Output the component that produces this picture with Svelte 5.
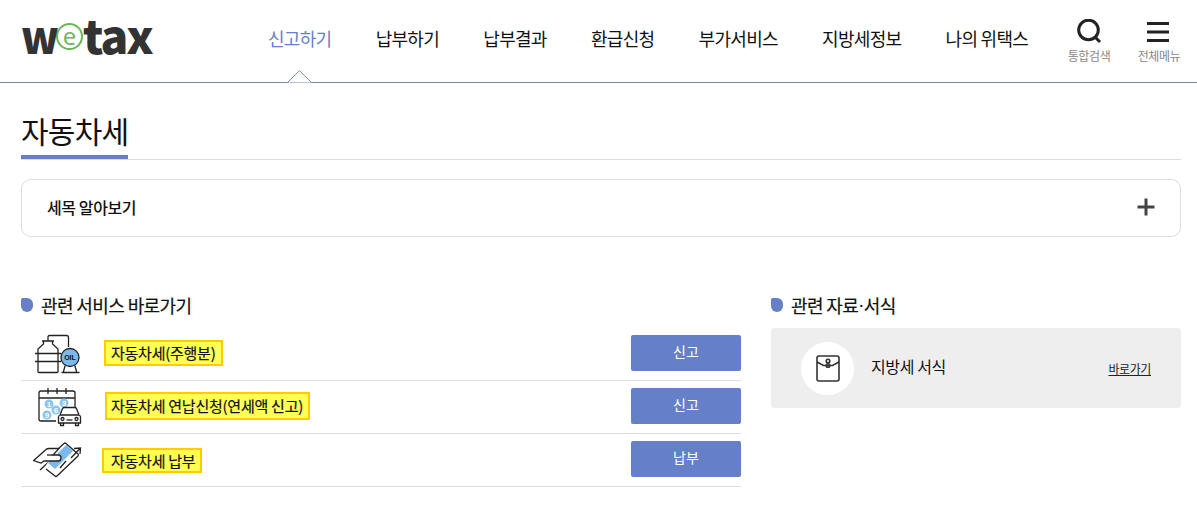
<script>
  const menus = ['신고하기', '납부하기', '납부결과', '환급신청', '부가서비스', '지방세정보', '나의 위택스'];
  const services = [
    { name: '자동차세(주행분)', action: '신고', icon: 'oil', left: 0, pad: 5, h: 26, up: 3 },
    { name: '자동차세 연납신청(연세액 신고)', action: '신고', icon: 'calendar', left: 1, pad: 4, h: 28, up: 3 },
    { name: '자동차세 납부', action: '납부', icon: 'card', left: -2, pad: 7, h: 25, up: 0 }
  ];
</script>

<header class="top">
  <div class="logo"><span class="logo-w">w</span><span class="logo-e"><span>e</span></span>tax</div>
  <nav class="gnb">
    {#each menus as menu, i}
      <span class="gnb-item" class:active={i === 0}>{menu}</span>
    {/each}
  </nav>
  <div class="utils">
    <div class="util">
      <svg width="26" height="25" viewBox="0 0 26 25">
        <circle cx="12.500" cy="11" r="9.800" fill="none" stroke="#222" stroke-width="3"/>
        <path d="M19 18l5 5" stroke="#222" stroke-width="3" fill="none"/>
      </svg>
      <span>통합검색</span>
    </div>
    <div class="util">
      <svg width="24" height="25" viewBox="0 0 24 25">
        <path d="M0 4.500h22M0 13h22M0 21.500h22" stroke="#222" stroke-width="3" fill="none"/>
      </svg>
      <span>전체메뉴</span>
    </div>
  </div>
  <svg class="notch" width="25" height="13" viewBox="0 0 25 13">
    <path d="M0.500 12.500L12.500 0.700l12 11.800" fill="#fff" stroke="#7d87aa"/>
  </svg>
</header>

<main class="content">
  <div class="title-row">
    <h1>자동차세</h1>
  </div>

  <div class="accordion">
    <strong>세목 알아보기</strong>
    <svg width="18" height="18" viewBox="0 0 18 18">
      <path d="M9 0.500v17M0.500 9h17" stroke="#444" stroke-width="3" fill="none"/>
    </svg>
  </div>

  <div class="columns">
    <section class="col-left">
      <h2><i class="bullet"></i>관련 서비스 바로가기</h2>
      <ul>
        {#each services as s}
          <li>
            <span class="icon">
              {#if s.icon === 'oil'}
                <svg width="50" height="40" viewBox="0 0 50 40" fill="none" stroke="#222" stroke-width="1.300">
                  <path d="M9 7h12M10.500 7v3L5 15v22.500q0 1 1 1h18q1 0 1-1V15l-5.500-5V7"/>
                  <path d="M2 19.500h26M2 27.500h26M15 7V3q0-1.500 1.500-1.500h17q2 0 2 2V13"/>
                  <circle cx="37" cy="23.500" r="9" fill="#7ab8ee"/>
                  <path d="M32 32l-1.500 5.500M42 32l1.500 5.500M29 38.500h17" stroke-linecap="round"/>
                  <text x="37" y="26" class="oil" text-anchor="middle">OIL</text>
                </svg>
              {:else if s.icon === 'calendar'}
                <svg class="shift" width="50" height="40" viewBox="0 0 50 40" fill="none" stroke="#222" stroke-width="1.300">
                  <path d="M20 34H5q-2 0-2-2V6q0-2 2-2h32q2 0 2 2v16M3 11h36M12 1v6M21 1v6M30 1v6"/>
                  <circle cx="13" cy="17" r="4.500" fill="#8ac4f2" stroke="none"/>
                  <circle cx="28" cy="16" r="4.500" fill="#8ac4f2" stroke="none"/>
                  <circle cx="20" cy="23" r="4.500" fill="#8ac4f2" stroke="none"/>
                  <circle cx="11" cy="28" r="4.500" fill="#8ac4f2" stroke="none"/>
                  <text x="13" y="20" class="num" text-anchor="middle">1</text>
                  <text x="28" y="19" class="num" text-anchor="middle">3</text>
                  <text x="20" y="26" class="num" text-anchor="middle">6</text>
                  <text x="11" y="31" class="num" text-anchor="middle">9</text>
                  <path d="M24 28l2.500-6.500q.5-1 2-1h10q1.500 0 2 1l2.500 6.500q1.500.5 1.500 2v6H22.500v-6q0-1.500 1.500-2zM24 28h19" fill="#fff"/>
                  <path d="M24.500 36v2.500h3V36M39.500 36v2.500h3V36"/>
                  <circle cx="26.500" cy="32" r="1.500"/><circle cx="40.500" cy="32" r="1.500"/>
                  <path d="M30.500 33h6"/>
                </svg>
              {:else}
                <svg width="50" height="40" viewBox="0 0 50 40" fill="none" stroke="#222" stroke-width="1.300">
                  <path d="M7 30L19 19"/>
                  <path d="M20 14L31 3.500q1-1 2 0L45 14q1 1 0 2L24 36q-1 1-2 0L12 27z" fill="#fff" stroke="none"/>
                  <path d="M33 5L40 11 22 29 15 23z" fill="#7ab8ee" stroke="none"/>
                  <path d="M26 8l5-4.500q1-1 2 0L45 14q1 1 0 2L24 36q-1 1-2 0l-9-7"/>
                  <path d="M27 28l6-7"/>
                  <path d="M38 18L47.500 8M41 8.500l6.500-.5-.5 6"/>
                  <path d="M0.700 20.500L13 9.500q1-1 3-1H26L20 15H25q3 0 3 3t-3 3H11l-3 2z" fill="#fff"/>
                  <path d="M14 15H20"/>
                </svg>
              {/if}
            </span>
            <span class="mark" style="margin-left: {s.left}px; padding-left: {s.pad}px; height: {s.h}px; line-height: {s.h - 4}px; margin-bottom: {s.up}px">{s.name}</span>
            <button class="btn">{s.action}</button>
          </li>
        {/each}
      </ul>
    </section>

    <section class="col-right">
      <h2><i class="bullet"></i>관련 자료<span class="dot">·</span>서식</h2>
      <div class="panel">
        <span class="circle">
          <svg width="24" height="27" viewBox="0 0 24 27" fill="none" stroke="#333" stroke-width="1.600">
            <rect x="1" y="1" width="22" height="25" rx="2"/>
            <path d="M1 7l6.500 3.500h9L23 7" />
            <circle cx="12" cy="6" r="1.800"/><circle cx="12" cy="10.500" r="1.800"/>
          </svg>
        </span>
        <span class="panel-name">지방세 서식</span>
        <a class="panel-link" href="#top">바로가기</a>
      </div>
    </section>
  </div>
</main>

<style>
  :global(body) {
    background: #fff;
    color: #111;
    font-family: "Noto Sans CJK KR", "Noto Sans", sans-serif;
  }

  .top {
    position: relative;
    height: 82px;
    display: flex;
    align-items: flex-start;
    border-bottom: 1px solid #7d87aa;
  }

  .logo {
    margin: 5px 0 0 21px;
    width: 227px;
    font-family: "Noto Sans CJK KR", sans-serif;
    font-weight: 900;
    font-size: 46px;
    line-height: 58px;
    letter-spacing: -2px;
    color: #333;
    display: flex;
    align-items: center;
  }
  .logo-w {
    width: 35px;
    transform: scaleX(0.92);
    transform-origin: left center;
  }
  .logo-e {
    width: 27px;
    height: 27px;
    margin: 5px 0 0 0;
    border: 2px solid #6cb65a;
    border-radius: 50%;
    box-sizing: border-box;
    display: flex;
    align-items: center;
    justify-content: center;
    background: #fff;
    flex: none;
  }
  .logo-e span {
    font-family: "Open Sans", sans-serif;
    font-weight: 400;
    font-size: 24px;
    line-height: 22px;
    color: #6cb65a;
    letter-spacing: 0;
    margin-top: -2px;
  }

  .gnb {
    display: flex;
    gap: 44.2px;
    margin-top: 25px;
    font-size: 18px;
    line-height: 27px;
    margin-left: 20px;
  }
  .gnb-item {
    letter-spacing: -0.7px;
    white-space: nowrap;
    color: #111;
  }
  .gnb-item.active {
    color: #6680c8;
  }

  .utils {
    position: absolute;
    left: 1067px;
    top: 19px;
    display: flex;
    gap: 26px;
  }
  .util {
    width: 44px;
    display: flex;
    flex-direction: column;
    align-items: center;
    gap: 3px;
    font-size: 12px;
    line-height: 17px;
    letter-spacing: -0.4px;
    color: #888;
    white-space: nowrap;
  }

  .notch {
    position: absolute;
    left: 287px;
    top: 70px;
  }

  .content {
    padding: 0 16px 0 21px;
  }

  .title-row {
    height: 77px;
    box-sizing: border-box;
    border-bottom: 1px solid #ddd;
    display: flex;
    align-items: flex-end;
  }
  h1 {
    margin: 0;
    font-size: 30px;
    font-weight: 400;
    line-height: 44px;
    height: 51px;
    box-sizing: border-box;
    letter-spacing: -0.75px;
    border-bottom: 4px solid #6680c8;
    white-space: nowrap;
  }

  .accordion {
    margin-top: 19px;
    height: 58px;
    box-sizing: border-box;
    border: 1px solid #ddd;
    border-radius: 10px;
    padding: 0 25px 2px;
    display: flex;
    align-items: center;
    justify-content: space-between;
  }
  .accordion strong {
    font-size: 16px;
    font-weight: 500;
    letter-spacing: -0.4px;
  }

  .columns {
    display: flex;
    gap: 30px;
    margin-top: 57px;
  }
  .col-left {
    width: 720px;
  }
  .col-right {
    width: 410px;
  }

  h2 {
    margin: 0;
    height: 34px;
    font-size: 18px;
    font-weight: 400;
    line-height: 22px;
    letter-spacing: -0.6px;
    -webkit-text-stroke: 0.2px #111;
    display: flex;
    align-items: flex-start;
    gap: 8px;
    white-space: nowrap;
  }
  .dot {
    font-family: "Liberation Sans", sans-serif;
    margin: 0 -8px;
  }
  .bullet {
    width: 12px;
    height: 14px;
    margin-top: 4px;
    background: #6680c8;
    border-radius: 2px 7px 7px 7px;
  }

  ul {
    margin: 0;
    padding: 0;
    list-style: none;
  }
  li {
    height: 53px;
    box-sizing: border-box;
    border-bottom: 1px solid #ddd;
    display: flex;
    align-items: center;
  }
  .icon {
    width: 83px;
    padding-left: 12px;
    box-sizing: border-box;
    display: flex;
  }
  .shift {
    margin-left: 3px;
    margin-right: -3px;
  }
  .mark {
    box-sizing: border-box;
    background: #ffff55;
    border: 2px solid #fc0;
    padding-right: 5px;
    font-size: 15px;
    font-weight: 400;
    letter-spacing: -0.25px;
    -webkit-text-stroke: 0.2px #111;
    white-space: nowrap;
  }
  .btn {
    margin: 0 0 2px auto;
    width: 110px;
    height: 36px;
    padding: 0 0 4px;
    border: 0;
    border-radius: 2px;
    background: #6680c8;
    color: #fff;
    font-family: inherit;
    font-size: 14px;
  }

  .oil {
    font: 700 7px "Liberation Sans", sans-serif;
    fill: #111;
    stroke: none;
  }
  .num {
    font: 700 8px "Liberation Sans", sans-serif;
    fill: #fff;
    stroke: none;
  }

  .panel {
    height: 80px;
    background: #eee;
    border-radius: 4px;
    padding: 0 30px;
    display: flex;
    align-items: center;
  }
  .circle {
    width: 53px;
    height: 53px;
    border-radius: 50%;
    background: #fff;
    display: flex;
    align-items: center;
    justify-content: center;
  }
  .panel-name {
    margin-left: 17px;
    font-size: 16px;
    letter-spacing: -0.4px;
    position: relative;
    top: -2px;
  }
  .panel-link {
    margin-left: auto;
    font-size: 12px;
    letter-spacing: -0.4px;
    color: #222;
    text-decoration: underline;
  }
</style>
